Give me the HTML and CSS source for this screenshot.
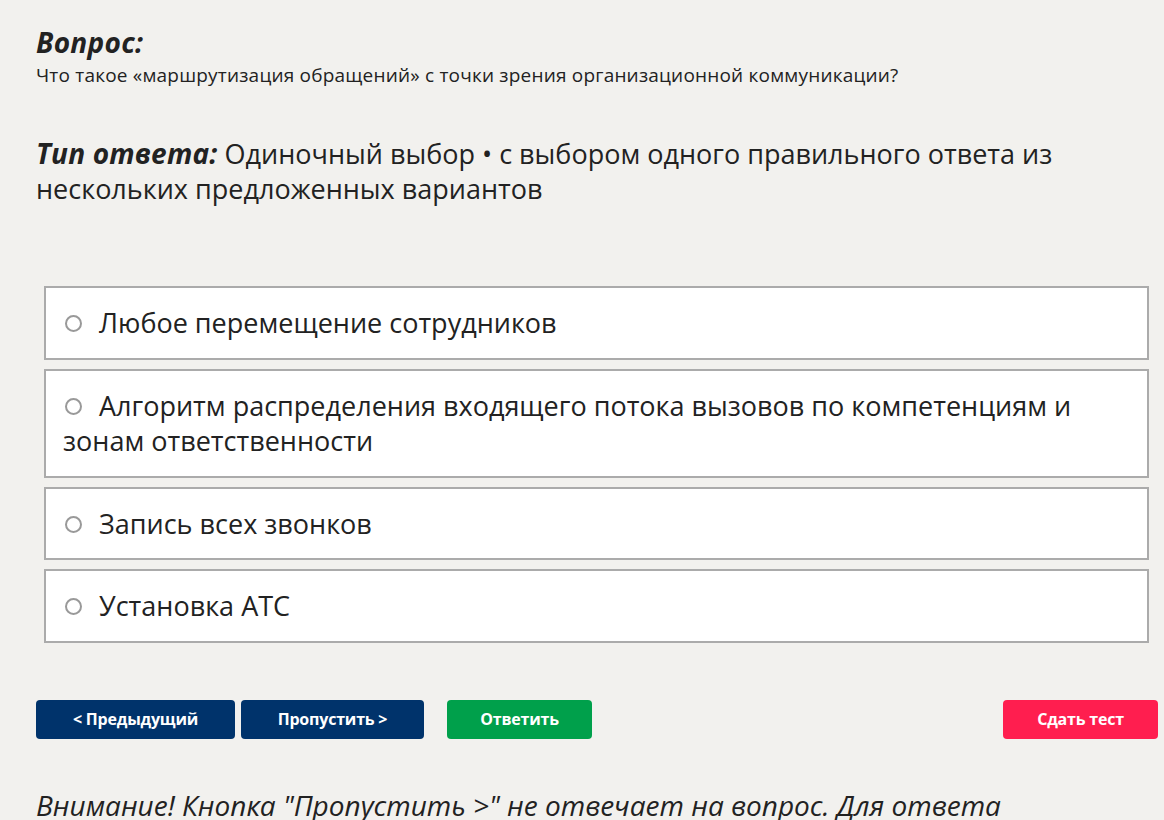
FILE: index.html
```html
<!DOCTYPE html>
<html lang="ru">
<head>
    <meta charset="UTF-8">
    <meta name="viewport" content="width=device-width, initial-scale=1.0">
    <title>Тест</title>
    <link rel="stylesheet" href="styles.css">
</head>
<body>
    <div class="page">
        <div class="question">
            <h2 class="label">Вопрос:</h2>
            <p class="question-text">Что такое «маршрутизация обращений» с точки зрения организационной коммуникации?</p>
        </div>

        <p class="answer-type"><span class="label">Тип ответа:</span> Одиночный выбор • с выбором одного правильного ответа из нескольких предложенных вариантов</p>

        <div class="options">
            <label class="option"><span class="radio"></span> Любое перемещение сотрудников</label>
            <label class="option"><span class="radio"></span> Алгоритм распределения входящего потока вызовов по компетенциям и зонам ответственности</label>
            <label class="option"><span class="radio"></span> Запись всех звонков</label>
            <label class="option"><span class="radio"></span> Установка АТС</label>
        </div>

        <div class="actions">
            <button class="btn btn-nav btn-prev">&lt; Предыдущий</button>
            <button class="btn btn-nav btn-skip">Пропустить &gt;</button>
            <button class="btn btn-answer">Ответить</button>
            <button class="btn btn-finish">Сдать тест</button>
        </div>

        <p class="note">Внимание! Кнопка "Пропустить &gt;" не отвечает на вопрос. Для ответа нажмите кнопку "Ответить".</p>
    </div>
</body>
</html>
```

FILE: styles.css
```css
* {
    margin: 0;
    padding: 0;
    box-sizing: border-box;
}

body {
    font-family: 'Open Sans', 'Noto Sans', sans-serif;
    background: #f2f1ee;
    color: #222;
}

.page {
    padding: 24px 6px 0 36px;
}

.label {
    font-weight: 700;
    font-style: italic;
    font-size: 28px;
    line-height: 36px;
    letter-spacing: 0.3px;
}

.question-text {
    font-size: 19px;
    line-height: 26px;
    letter-spacing: 0.2px;
    margin-top: 2px;
}

.answer-type {
    margin-top: 47px;
    font-size: 27px;
    line-height: 35px;
    padding-right: 40px;
}

.answer-type .label {
    font-size: 28px;
    letter-spacing: 0.2px;
}

.options {
    margin: 80px 9px 0 8px;
    display: flex;
    flex-direction: column;
    gap: 9px;
}

.option {
    display: block;
    background: #fff;
    border: 2px solid #ababab;
    padding: 17px 17px;
    font-size: 27px;
    line-height: 35.5px;
}

.radio {
    display: inline-block;
    width: 17px;
    height: 17px;
    border: 2px solid #999;
    border-radius: 50%;
    margin: 0 10px 0 2px;
    vertical-align: 1px;
}

.actions {
    margin-top: 57px;
    display: flex;
}

.btn {
    height: 39px;
    border: none;
    border-radius: 4px;
    color: #fff;
    font-family: 'Open Sans', 'Noto Sans', sans-serif;
    font-weight: 700;
    font-size: 16px;
    letter-spacing: -0.2px;
    cursor: pointer;
}

.btn-nav {
    background: #00336b;
}

.btn-prev {
    width: 199px;
}

.btn-skip {
    width: 183px;
    margin-left: 6px;
}

.btn-answer {
    width: 145px;
    margin-left: 23px;
    background: #00a04b;
}

.btn-finish {
    width: 155px;
    margin-left: auto;
    background: #ff1e4f;
}

.note {
    margin-top: 48px;
    padding-right: 100px;
    font-size: 28px;
    font-style: italic;
    line-height: 36px;
}
```
